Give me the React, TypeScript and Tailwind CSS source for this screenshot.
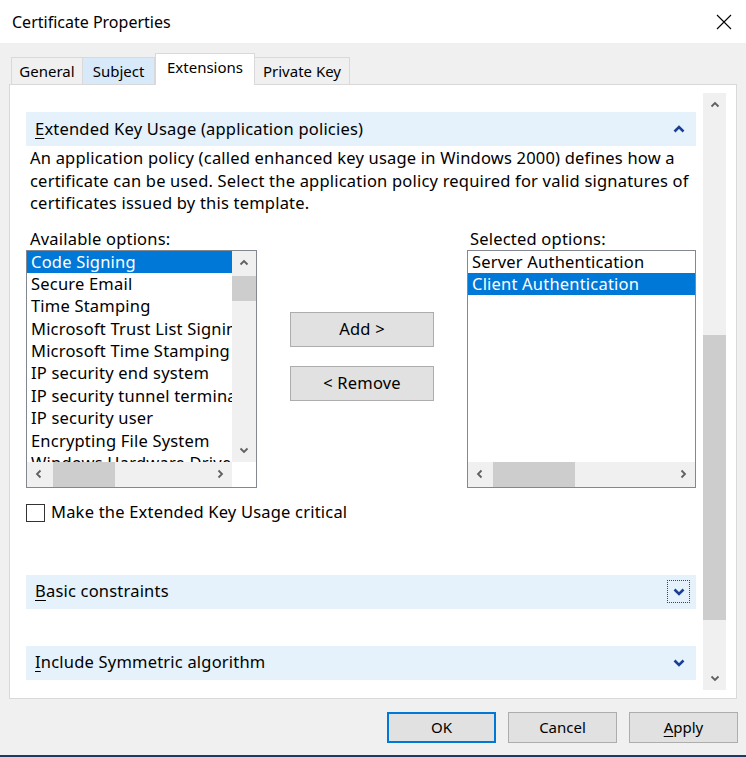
import React from 'react';

const Chev = ({ dir, className }: { dir: 'up' | 'down' | 'left' | 'right'; className?: string }) => {
  const d =
    dir === 'up'
      ? 'M1.5 6.5 L5 3 L8.5 6.5'
      : dir === 'down'
      ? 'M1.5 3.5 L5 7 L8.5 3.5'
      : dir === 'left'
      ? 'M6.5 1.5 L3 5 L6.5 8.5'
      : 'M3.5 1.5 L7 5 L3.5 8.5';
  return (
    <svg width="10" height="10" viewBox="0 0 10 10" className={className}>
      <path d={d} fill="none" stroke="#606060" strokeWidth="1.8" />
    </svg>
  );
};

const NavyChev = ({ up }: { up?: boolean }) => (
  <svg width="12" height="8" viewBox="0 0 12 8">
    <path d={up ? 'M1.5 6.5 L6 2 L10.5 6.5' : 'M1.5 1.5 L6 6 L10.5 1.5'} fill="none" stroke="#1b3f94" strokeWidth="2.6" />
  </svg>
);

const available = [
  'Code Signing',
  'Secure Email',
  'Time Stamping',
  'Microsoft Trust List Signing',
  'Microsoft Time Stamping',
  'IP security end system',
  'IP security tunnel termination',
  'IP security user',
  'Encrypting File System',
  'Windows Hardware Driver Verification',
];

function HScroll({ thumbLeft, thumbWidth }: { thumbLeft: number; thumbWidth: number }) {
  return (
    <div className="h-[25px] bg-[#f0f0f0] flex items-center flex-1 relative">
      <div className="w-[24px] h-full flex items-center justify-center">
        <Chev dir="left" />
      </div>
      <div className="flex-1 h-full relative">
        <div className="absolute top-0 h-full bg-[#cdcdcd]" style={{ left: thumbLeft, width: thumbWidth }} />
      </div>
      <div className="w-[24px] h-full flex items-center justify-center">
        <Chev dir="right" />
      </div>
    </div>
  );
}

function SectionBar({ label, rest, children }: { label: string; rest: string; children?: React.ReactNode }) {
  return (
    <div className="h-[34px] bg-[#e5f1fb] flex items-center justify-between pl-[9px] pr-[6px]">
      <span>
        <u className="underline-offset-[3px]">{label}</u>
        {rest}
      </span>
      {children}
    </div>
  );
}

export default function App() {
  return (
    <div className="w-[746px] h-[757px] bg-[#f0f0f0] flex flex-col overflow-hidden text-black text-[15px] font-['Noto_Sans',sans-serif]">
      {/* title bar */}
      <div className="h-[43px] bg-white flex items-center justify-between pl-[12px] pr-[14px] shrink-0">
        <span className="text-[16px]">Certificate Properties</span>
        <svg width="16" height="16" viewBox="0 0 16 16">
          <path d="M1 1 L15 15 M15 1 L1 15" stroke="#000" strokeWidth="1.1" />
        </svg>
      </div>

      {/* tabs */}
      <div className="h-[41px] flex items-end pl-[11px] shrink-0">
        <div className="h-[27px] w-[72px] border border-b-0 border-[#d9d9d9] bg-[#f0f0f0] flex items-center justify-center">General</div>
        <div className="h-[27px] w-[72px] border border-b-0 border-l-0 border-[#d9d9d9] bg-[#d8eaf9] flex items-center justify-center">Subject</div>
        <div className="h-[32px] w-[100px] -mb-px relative z-10 border border-b-0 border-[#d9d9d9] bg-white flex items-start pt-[2px] justify-center">Extensions</div>
        <div className="h-[27px] w-[95px] border border-b-0 border-l-0 border-[#d9d9d9] bg-[#f0f0f0] flex items-center justify-center">Private Key</div>
      </div>

      {/* panel */}
      <div className="mx-[9px] h-[615px] bg-white border border-[#d9d9d9] flex shrink-0 text-[16.5px] tracking-[0.2px]">
        <div className="w-[686px] pl-[16px] pt-[27px] flex flex-col">
          <SectionBar label="E" rest="xtended Key Usage (application policies)">
            <div className="w-[23px] h-[23px] flex items-center justify-center">
              <NavyChev up />
            </div>
          </SectionBar>
          <p className="mt-px pl-[4px] leading-[22.5px] whitespace-nowrap">
            An application policy (called enhanced key usage in Windows 2000) defines how a<br />
            certificate can be used. Select the application policy required for valid signatures of<br />
            certificates issued by this template.
          </p>

          <div className="mt-[12px] flex">
            <div className="w-[231px]">
              <div className="pl-[4px] leading-[23px]">Available options:</div>
              <div className="h-[238px] border border-[#828790] flex flex-col">
                <div className="flex h-[211px]">
                  <div className="flex-1 overflow-hidden">
                    {available.map((o, i) => (
                      <div
                        key={o}
                        className={`h-[22.4px] leading-[22.4px] pl-[4px] whitespace-nowrap ${i === 0 ? 'bg-[#0078d7] text-white' : ''}`}
                      >
                        {o}
                      </div>
                    ))}
                  </div>
                  <div className="w-[24px] bg-[#f0f0f0] flex flex-col">
                    <div className="h-[24px] flex items-center justify-center">
                      <Chev dir="up" />
                    </div>
                    <div className="h-[25px] mt-px bg-[#cdcdcd]" />
                    <div className="flex-1" />
                    <div className="h-[24px] flex items-center justify-center">
                      <Chev dir="down" />
                    </div>
                  </div>
                </div>
                <div className="flex">
                  <HScroll thumbLeft={2} thumbWidth={62} />
                  <div className="w-[24px] bg-white" />
                </div>
              </div>
            </div>

            <div className="w-[210px] flex flex-col items-center pt-[85px] gap-[19px]">
              <button className="w-[144px] h-[35px] bg-[#e1e1e1] border border-[#adadad]">Add &gt;</button>
              <button className="w-[144px] h-[35px] bg-[#e1e1e1] border border-[#adadad]">&lt; Remove</button>
            </div>

            <div className="w-[229px]">
              <div className="pl-[3px] leading-[23px]">Selected options:</div>
              <div className="h-[238px] border border-[#828790] flex flex-col">
                <div className="h-[211px] overflow-hidden">
                  <div className="h-[22.4px] leading-[22.4px] pl-[4px] whitespace-nowrap">Server Authentication</div>
                  <div className="h-[22.4px] leading-[22.4px] pl-[4px] whitespace-nowrap bg-[#0078d7] text-white">Client Authentication</div>
                </div>
                <div className="flex">
                  <HScroll thumbLeft={1} thumbWidth={82} />
                </div>
              </div>
            </div>
          </div>

          <div className="mt-[14px] h-[22px] flex items-center gap-[6px]">
            <div className="w-[19px] h-[18px] border border-[#333] bg-white" />
            <span>Make the Extended Key Usage critical</span>
          </div>

          <div className="mt-[51px]">
            <SectionBar label="B" rest="asic constraints">
              <div className="w-[23px] h-[23px] border border-dotted border-[#444] flex items-center justify-center">
                <NavyChev />
              </div>
            </SectionBar>
          </div>

          <div className="mt-[37px]">
            <SectionBar label="I" rest="nclude Symmetric algorithm">
              <div className="w-[23px] h-[23px] flex items-center justify-center">
                <NavyChev />
              </div>
            </SectionBar>
          </div>
        </div>

        {/* outer scrollbar */}
        <div className="w-[23px] ml-[7px] my-[8px] bg-[#f0f0f0] flex flex-col">
          <div className="h-[24px] flex items-center justify-center">
            <Chev dir="up" />
          </div>
          <div className="h-[218px]" />
          <div className="h-[285px] bg-[#cdcdcd]" />
          <div className="flex-1" />
          <div className="h-[24px] flex items-center justify-center">
            <Chev dir="down" />
          </div>
        </div>
      </div>

      {/* dialog buttons */}
      <div className="mt-[13px] flex justify-end pr-[8px] gap-[12px]">
        <button className="w-[109px] h-[31px] bg-[#e1e1e1] border-2 border-[#0078d7]">OK</button>
        <button className="w-[109px] h-[31px] bg-[#e1e1e1] border border-[#adadad]">Cancel</button>
        <button className="w-[109px] h-[31px] bg-[#e1e1e1] border border-[#adadad]">
          <u className="underline-offset-[3px]">A</u>pply
        </button>
      </div>

      <div className="flex-1" />
      <div className="h-[2px] bg-[#1d3b5e]" />
    </div>
  );
}
